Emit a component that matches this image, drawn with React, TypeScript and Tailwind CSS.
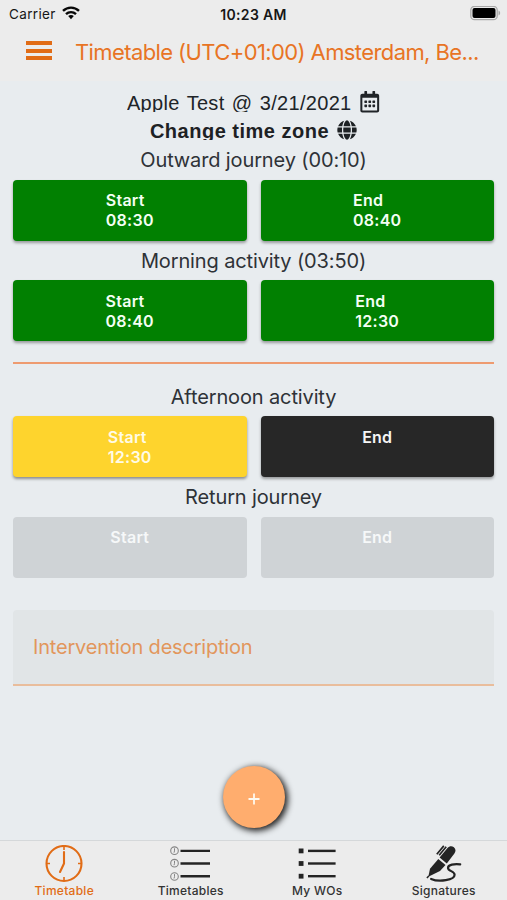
import { useState } from "react";
import { FaGlobe, FaRegCalendarAlt } from "react-icons/fa";

type Slot = { label: string; time?: string; color: string };

const green = "bg-[#018001] text-[#f4fff4] shadow-[0_2px_3px_rgba(0,0,0,0.35)]";
const yellow = "bg-[#fed42d] text-[#fffbe6] shadow-[0_2px_3px_rgba(0,0,0,0.4)]";
const dark = "bg-[#272727] text-[#f5f5f5] shadow-[0_2px_3px_rgba(0,0,0,0.35)]";
const disabled = "bg-[#cfd3d6] text-[#f6f8f9]";

const morning = [
  { title: "Outward journey (00:10)", slots: [{ label: "Start", time: "08:30", color: green }, { label: "End", time: "08:40", color: green }] },
  { title: "Morning activity (03:50)", slots: [{ label: "Start", time: "08:40", color: green }, { label: "End", time: "12:30", color: green }] },
];

const afternoon = [
  { title: "Afternoon activity", slots: [{ label: "Start", time: "12:30", color: yellow }, { label: "End", color: dark }] },
  { title: "Return journey", slots: [{ label: "Start", color: disabled }, { label: "End", color: disabled }] },
];

function SlotButton({ slot }: { slot: Slot }) {
  return (
    <button className={`flex h-[61px] flex-1 justify-center rounded-[4px] pt-[10.5px] ${slot.color}`}>
      <span className="text-left text-[16px] leading-5 font-semibold tracking-[0.25px]">
        {slot.label}
        {slot.time && <span className="block">{slot.time}</span>}
      </span>
    </button>
  );
}

function Activity({ title, slots }: { title: string; slots: Slot[] }) {
  return (
    <section className="h-[100.5px]">
      <h2 className="h-[34.5px] pt-[3px] text-center text-[20px] leading-6 tracking-[-0.13px] text-[#2e3237]">{title}</h2>
      <div className="flex gap-[14px]">
        {slots.map((s) => <SlotButton key={s.label} slot={s} />)}
      </div>
    </section>
  );
}

function ClockIcon() {
  return (
    <svg width="38" height="38" viewBox="0 0 38 38" fill="none" stroke="currentColor" strokeWidth="2.1">
      <circle cx="19" cy="18.5" r="17.5" />
      <path d="M19 1v4M19 32v4M1 18.5h4M33 18.5h4" strokeWidth="1.6" />
      <path d="M19 7v11.5l-4 8.5" strokeLinecap="round" strokeLinejoin="round" />
    </svg>
  );
}

function ClockListIcon() {
  return (
    <svg width="42" height="38" viewBox="0 0 42 38" fill="none">
      {[5.7, 18.2, 31.5].map((y) => (
        <g key={y} stroke="#858585">
          <circle cx="4.5" cy={y} r="3.8" strokeWidth="1.1" />
          <path d={`M4.5 ${y - 2.4}v2.6l-.5 1.8`} strokeWidth="1" />
        </g>
      ))}
      <path d="M10.500 5.900h29.500M10.500 18.500h29.500M10.500 31.200h29.500" stroke="#242424" strokeWidth="2.4" />
    </svg>
  );
}

function ListIcon() {
  return (
    <svg width="38" height="38" viewBox="0 0 38 38">
      {[5.9, 18.5, 31.2].map((y) => (
        <g key={y} fill="#242424">
          <rect x="0.7" y={y - 2.4} width="4.8" height="4.8" />
          <rect x="10" y={y - 1.2} width="27.6" height="2.4" />
        </g>
      ))}
    </svg>
  );
}

function PenIcon() {
  return (
    <svg className="-ml-px overflow-visible" width="38" height="38" viewBox="0 0 38 38" fill="#242424">
      <path d="M15.6 12.4L23.500 3c1.900-2.200 4.500-2.300 6.400-.7 2 1.700 2.100 4 .5 6.100L22.800 18.400z" />
      <path d="M14.300 13.900l7.200 6-5.500 6.100L4.300 31.800l1.700-8z" />
      <path d="M12.800 9.200L19.800.9M15.200 10.200l7-8.500" fill="none" stroke="#242424" strokeWidth="1.700" />
      <path d="M4.800 30.900L2.900 33" stroke="#242424" strokeWidth="1.500" />
      <path d="M36.200 19.400c-6-.6-12.200.2-12.200 3.500 0 3.300 6.600 3.200 6.600 6.800 0 5.400-15.600 7.800-23.500 4.200" fill="none" stroke="#242424" strokeWidth="2.200" strokeLinecap="round" />
    </svg>
  );
}

const tabs = [
  { name: "Timetable", icon: <ClockIcon /> },
  { name: "Timetables", icon: <ClockListIcon /> },
  { name: "My WOs", icon: <ListIcon /> },
  { name: "Signatures", icon: <PenIcon /> },
];

function StatusBar() {
  return (
    <div className="grid h-7 grid-cols-3 items-center pr-[6px] pl-[9px] text-[13.5px] text-[#161616]">
      <div className="flex items-center gap-[6px]">
        <span className="tracking-[0.35px]">Carrier</span>
        <svg className="-mt-[2px]" width="18" height="14" viewBox="0 0 18 14" fill="none" stroke="#080808" strokeWidth="2.4">
          <path d="M1 4.900C5.600.5 12.400.5 17 4.900" />
          <path d="M4 8.100c2.800-2.700 7.200-2.700 10 0" />
          <path d="M6.200 10.100c1.600-1.500 4-1.500 5.600 0L9 13.200z" fill="#080808" stroke="none" />
        </svg>
      </div>
      <span className="-ml-[3px] text-center text-[14px] font-semibold tracking-[0.35px] whitespace-nowrap">10:23 AM</span>
      <svg className="-mt-px justify-self-end" width="31" height="15" viewBox="0 0 31 15">
        <rect x="0.8" y="0.3" width="26.4" height="13.4" rx="3.8" fill="none" stroke="#a9a9a9" strokeWidth="1.3" />
        <rect x="2.5" y="2.1" width="23" height="9.8" rx="2" fill="#000" />
        <path d="M28.500 4.500c2.200.8 2.200 4.200 0 5z" fill="#a9a9a9" />
      </svg>
    </div>
  );
}

export default function App() {
  const [tab, setTab] = useState("Timetable");

  return (
    <div className="flex h-[900px] w-[507px] flex-col overflow-hidden bg-[#e8ecef] font-[Inter,sans-serif]">
      <header className="h-[81px] bg-[#ececec]">
        <StatusBar />
        <div className="flex h-12 items-center pl-[26px]">
          <button className="mb-[3px] flex w-[26px] flex-col gap-[3.5px]">
            <span className="h-1 bg-[#e16c16]" />
            <span className="h-1 bg-[#e16c16]" />
            <span className="h-1 bg-[#e16c16]" />
          </button>
          <h1 className="ml-[23px] text-[22px] tracking-[-0.6px] whitespace-nowrap text-[#e87424]">Timetable (UTC+01:00) Amsterdam, Be...</h1>
        </div>
      </header>

      <main className="flex-1 px-[13px] pt-[9px]">
        <div className="flex h-[27px] items-start justify-center gap-[7px] text-[#202428]">
          <span className="h-[22px] overflow-hidden font-['Liberation_Sans',sans-serif] text-[20px] leading-[26px] tracking-[0.3px] [word-spacing:1.5px]">Apple Test @ 3/21/2021</span>
          <FaRegCalendarAlt className="mt-px" size={21.5} />
        </div>
        <div className="flex h-7 items-start justify-center gap-2 text-[#1d2124]">
          <span className="h-[23px] overflow-hidden font-['Liberation_Sans',sans-serif] text-[20px] leading-[28px] font-bold tracking-[0.5px]">Change time zone</span>
          <FaGlobe className="mt-[3px]" size={20} />
        </div>
        {morning.map((a) => <Activity key={a.title} {...a} />)}
        <hr className="mt-[16px] mb-[17.5px] border-t-2 border-[#ee9b70]" />
        {afternoon.map((a) => <Activity key={a.title} {...a} />)}
        <div className="mt-[27.5px] flex h-[76px] items-center rounded-t-[4px] border-b-2 border-[#e9bd9c] bg-[#e1e5e7] pl-5 text-[20px] tracking-[-0.2px] text-[#e2965c]">
          Intervention description
        </div>
        <button className="mx-auto mt-[80px] flex size-[62px] items-center justify-center rounded-full bg-[#ffad6e] pt-[3px] shadow-[2px_2px_6px_1px_#222]">
          <svg width="12" height="12" viewBox="0 0 12 12" stroke="#fff9ee" strokeWidth="1.8">
            <path d="M6 .5v11M.5 6h11" />
          </svg>
        </button>
      </main>

      <nav className="flex h-[60px] border-t border-[#d5d8da] bg-[#ececec] pl-px">
        {tabs.map((t) => (
          <button
            key={t.name}
            onClick={() => setTab(t.name)}
            className={`flex flex-1 flex-col items-center pt-[4px] text-[12px] leading-4 font-medium tracking-[0.27px] ${tab === t.name ? "text-[#e16c16]" : "text-[#333]"}`}
          >
            {t.icon}
            <span>{t.name}</span>
          </button>
        ))}
      </nav>
    </div>
  );
}
